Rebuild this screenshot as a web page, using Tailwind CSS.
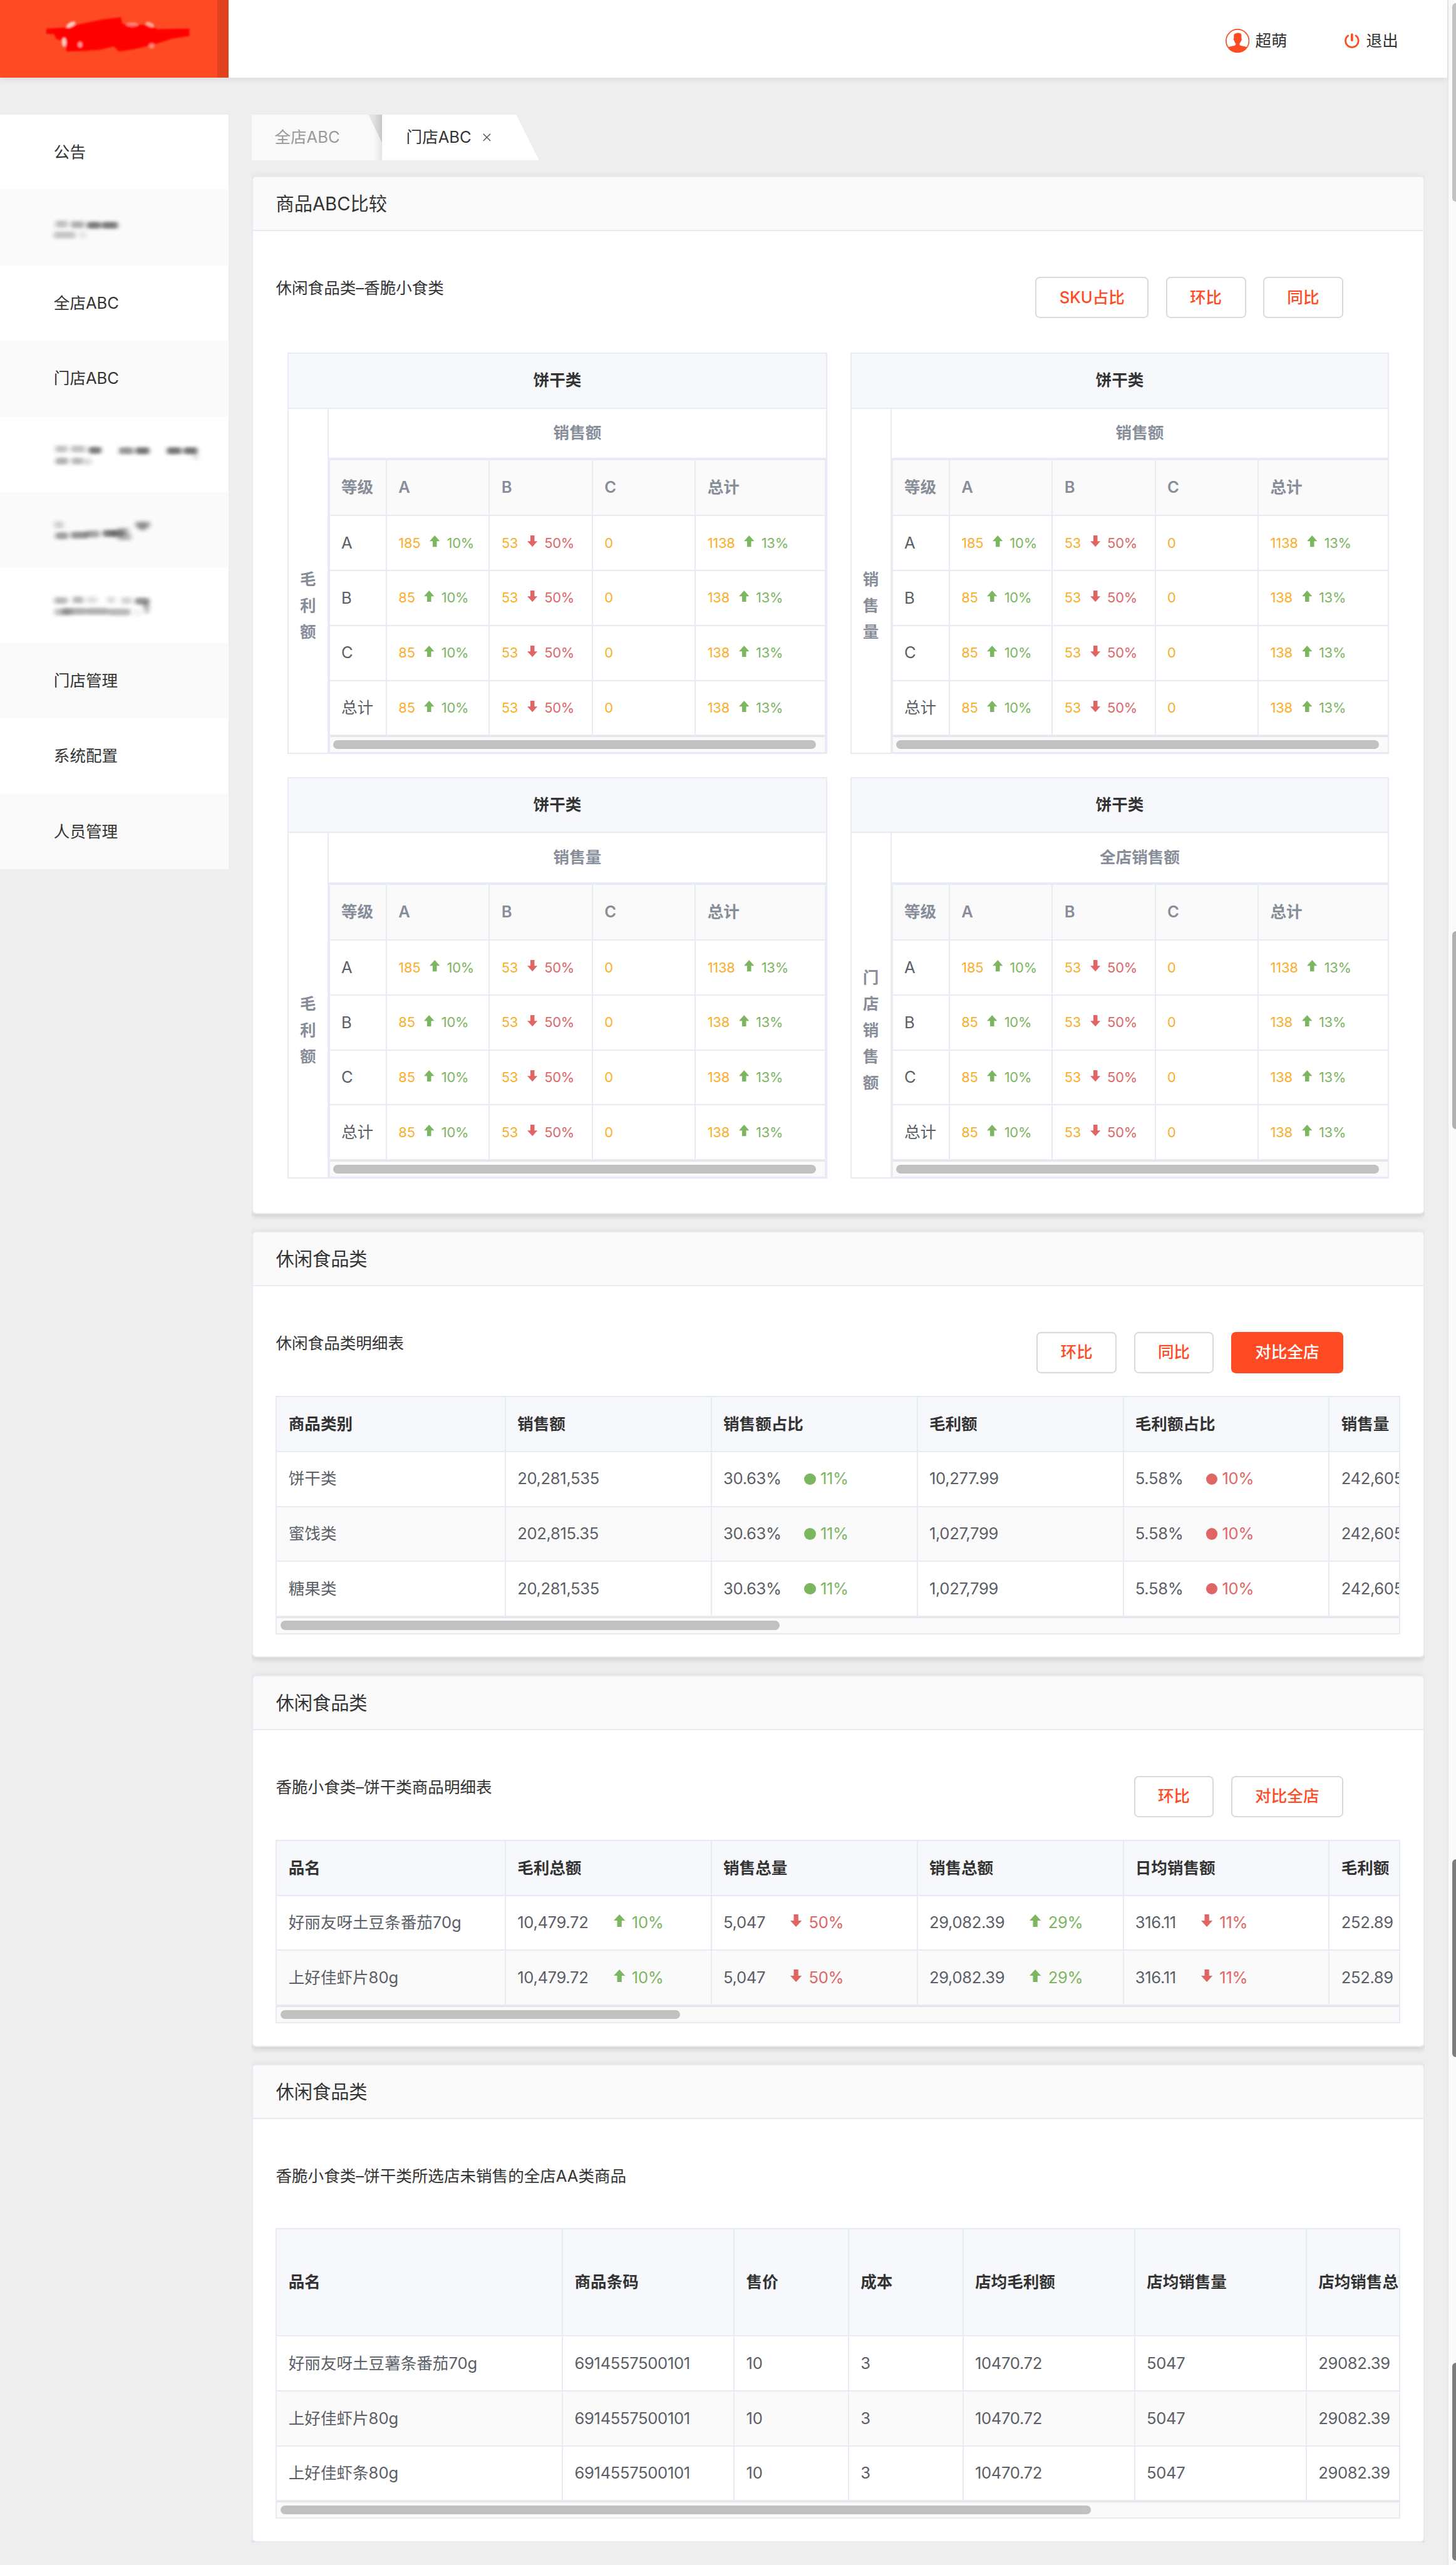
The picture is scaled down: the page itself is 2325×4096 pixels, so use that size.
<!DOCTYPE html>
<html lang="zh-CN" class="text-[29.234px]">
<head>
<meta charset="utf-8">
<title>门店ABC</title>
<script src="https://cdn.jsdelivr.net/npm/@tailwindcss/browser@4"></script>
</head>
<body class="overflow-hidden bg-[#eeeeee] font-['Inter','Noto_Sans_CJK_SC',sans-serif] text-sm text-[#333333]">
<div class="flex h-[4096px] w-[2325px] overflow-hidden">
  <div class="flex w-316.25 shrink-0 flex-col">
    <header class="relative flex h-17 shrink-0 justify-between bg-white shadow-[0_4px_10px_rgba(0,0,0,0.07)]">
      <div class="h-17 w-50 border-r-[18px] border-[#e2431f] bg-[#fe4b24]">
        <svg class="h-17 w-47.5" viewBox="0 0 380 136">
          <defs><filter id="soft" x="-20%" y="-20%" width="140%" height="140%"><feGaussianBlur stdDeviation="2"/></filter></defs>
          <g filter="url(#soft)">
            <polygon fill="#ff0000" points="81,50 116,48 150,40 180,34 211,30 214,42 263,44 275,51 331,50 331,63 300,68 269,78 235,86 208,90 199,81 175,87 147,89 116,90 116,74 98,68 95,60 81,59"/>
            <g fill="#ffc4bc">
              <ellipse cx="124" cy="43" rx="9" ry="4" transform="rotate(-28 124 43)"/>
              <ellipse cx="231" cy="43" rx="11" ry="4" opacity=".5"/>
              <ellipse cx="262" cy="43" rx="8" ry="4" transform="rotate(25 262 43)" opacity=".7"/>
              <ellipse cx="112" cy="74" rx="4" ry="8"/>
              <ellipse cx="140" cy="78" rx="4" ry="5" opacity=".7"/>
              <ellipse cx="265" cy="80" rx="5" ry="5" opacity=".5"/>
            </g>
          </g>
        </svg>
      </div>
      <div class="flex items-center pt-0.75 pr-10.75">
        <svg class="h-5.25 w-5.25" viewBox="0 0 42 42">
          <defs><clipPath id="disc"><circle cx="21" cy="21" r="20"/></clipPath></defs>
          <g clip-path="url(#disc)" fill="#fe4b24">
            <path d="M14.500 12c0-2.400 1.300-3.800 3.200-3.900 1.600-1.100 4-1 5.600-.6 3.200 0 4.700 1.600 4.600 4.300l-.2 5c1.200.2.900 3.200-.6 4.300-.5 2.300-1.500 3.600-2.700 4.800 0 2 .9 3 2.600 3.600l6.600 1.400c3 .7 5.500 2 7 4.100V43H2v-8c1.500-2.200 3.500-3.400 6.500-4.100l6.600-1.400c2-.6 2.800-1.600 2.800-3.600-1.200-1.200-2.200-2.900-2.600-5.100-1.500-1-1.900-4.100-.7-4.300z"/>
          </g>
          <circle cx="21" cy="21" r="20" fill="none" stroke="#fe4b24" stroke-width="1.900"/>
        </svg>
        <span class="ml-1.25">超萌</span>
        <svg class="ml-12.5 h-3.25 w-3.25" viewBox="0 0 26 26" fill="none" stroke="#fe4b24" stroke-width="3" stroke-linecap="round">
          <path d="M6.300 4.300a11.300 11.300 0 1 0 13.400 0"/><path d="M13 2.200v10" stroke-width="4"/>
        </svg>
        <span class="ml-1.5">退出</span>
      </div>
    </header>

    <div class="mt-8 flex">
      <nav id="side" class="w-50 shrink-0"></nav>
      <main class="ml-5 w-256.25 overflow-hidden">
        <div class="flex h-10">
          <div class="relative flex w-28.5 items-center bg-linear-to-r from-[#eeeeee] from-85% to-[#d9d9d9] pl-5 text-[#999999]">
            <svg class="absolute inset-0 h-full w-full" viewBox="0 0 228 80" preserveAspectRatio="none"><polygon points="0,0 204,0 228,50 228,80 0,80" fill="#f9f9f9"/></svg>
            <div class="absolute inset-y-0 right-0 w-2 bg-linear-to-r from-black/0 to-black/8"></div>
            <span class="relative">全店ABC</span>
          </div>
          <div class="flex w-34.25 items-center bg-white pl-5.25 [clip-path:polygon(0_0,85.5%_0,100%_100%,0_100%)]">
            <span>门店ABC</span>
            <svg class="ml-2.5 h-1.75 w-1.75" viewBox="0 0 14 14" stroke="#555555" stroke-width="1.600"><path d="M.8.8l12.400 12.400M13.200.8L.8 13.200"/></svg>
          </div>
        </div>
        <div id="cards" class="mt-3.5 flex flex-col gap-3.75"></div>
      </main>
    </div>
  </div>

  <div class="flex flex-1 flex-col border-l-2 border-[#e8e8e8] bg-[#fafafa] pl-0.75">
    <div class="mt-0.75 h-43.25 shrink-0 rounded-l-lg bg-[#c1c1c1]"></div>
    <div class="mt-159.5 h-43.25 shrink-0 rounded-l-lg bg-[#b0b0b0]"></div>
    <div class="mt-159.5 h-43.25 shrink-0 rounded-l-lg bg-[#7d7d7d]"></div>
    <div class="mt-66.75 h-43.25 shrink-0 rounded-l-lg bg-[#7d7d7d]"></div>
  </div>
</div>

<script>
// Sidebar: strings are labels, arrays are redacted entries as [x, y, width, darkness] strokes.
const side = [
  '公告',
  [[97,58,21,.35],[124,59,23,.45],[152,60,24,.75],[178,60,28,.75],[94,77,38,.3],[140,77,10,.15]],
  '全店ABC', '门店ABC',
  [[97,55,21,.35],[124,55,25,.35],[155,57,22,.75],[208,58,25,.6],[237,58,24,.8],[292,58,25,.8],[321,58,24,.8],[338,68,8,.2],[97,76,22,.45],[125,76,20,.4],[146,77,14,.2]],
  [[95,55,16,.25],[237,55,25,.5],[243,60,12,.4],[97,74,22,.55],[124,73,30,.6],[150,71,24,.5],[180,70,24,.75],[195,70,22,.6],[205,66,20,.4],[205,76,24,.4]],
  [[95,56,23,.4],[127,55,19,.4],[152,55,18,.18],[187,55,14,.2],[212,56,18,.25],[236,57,25,.6],[250,64,11,.45],[252,73,9,.35],[95,76,30,.35],[108,75,42,.45],[150,75,40,.45],[190,76,38,.4],[236,77,8,.12]],
  '门店管理', '系统配置', '人员管理',
];
const smudge = s => `<svg class="h-16.5 w-50" viewBox="0 0 400 132">
  <defs><filter id="smear" x="-10%" y="-60%" width="120%" height="220%"><feGaussianBlur stdDeviation="3.8 3"/></filter></defs>
  <g filter="url(#smear)" fill="#333333" opacity=".85" transform="translate(0 2)">${s.map(([x, y, w, o]) => `<rect x="${x}" y="${y - 6}" width="${w}" height="12" rx="4" opacity="${o}"/>`).join('')}</g></svg>`;
document.getElementById('side').innerHTML = side.map((s, i) =>
  `<div class="${i % 2 ? 'bg-[#fafafa]' : 'bg-white'} flex h-16.5 items-center">${typeof s === 'string' ? `<span class="pl-11.75">${s}</span>` : smudge(s)}</div>`).join('');

const UP = 'M10 0L20 11H14V22H6V11H0z', DOWN = 'M6 0h8v11h6L10 22 0 11h6z';
const arrow = (dir, cls) => `<svg class="${cls}" viewBox="0 0 20 22" fill="currentColor"><path d="${dir === 'u' ? UP : DOWN}"/></svg>`;
const tone = d => (d === 'u' || d === 'g') ? 'text-[#7db661]' : 'text-[#e06666]';
const button = (t, on) => `<button class="${on ? 'border-[#fe4b24] bg-[#fe4b24] text-white' : 'border-[#d9d9d9] bg-white text-[#fe4b24]'} ${t.startsWith('SKU') ? 'w-24.75' : t.length > 2 ? 'w-24.5' : 'w-17.5'} h-9 rounded border-2 text-center font-medium">${t}</button>`;
const scrollbar = w => `<div class="flex h-3.5 items-center border-t-2 border-[#e6e6e8] bg-[#fafafa] pl-0.75"><div class="${w} h-2 rounded-full bg-[#c1c1c1]"></div></div>`;

const card = (title, sub, tools, height, toolsH, body) => `
<section class="${height} rounded-[7px] border-2 border-[#e6ebf5] bg-white shadow-[0_4px_8px_rgba(0,0,0,0.1),0_0_12px_rgba(0,0,0,0.05)]">
  <h2 class="flex h-11.75 items-center rounded-t-[6px] border-b-2 border-[#e6ebf5] bg-[#fafafa] pt-0.25 pl-5 text-base">${title}</h2>
  <div class="${toolsH} flex items-start justify-between pt-10 pr-17.5 pl-5">
    <h3 class="text-sm leading-5">${sub}</h3>
    <div class="flex gap-3.75">${tools}</div>
  </div>
  ${body}
</section>`;

// 3-grade matrix
const small = c => {
  const [v, d, p] = c;
  return `<span class="text-[#fbae2c]">${v}</span>` + (d ? `<span class="${tone(d)} flex items-center">${arrow(d, 'ml-2 mb-0.75 w-2.25 h-2.5')}<span class="ml-1.5">${p}</span></span>` : '');
};
const mw = ['w-12.5', 'w-22.5', 'w-22.5', 'w-22.5'];
const matrixRow = (name, a, t) => `<div class="flex h-12">
  ${[`<span class="text-sm tracking-normal">${name}</span>`, small([a, 'u', '10%']), small(['53', 'd', '50%']), small(['0'])].map((c, i) => `<div class="${mw[i]} flex shrink-0 items-center border-r-2 border-b-2 border-[#e6ebf5] px-2.5 tracking-[-0.01em] whitespace-nowrap">${c}</div>`).join('')}
  <div class="flex flex-1 items-center border-b-2 border-[#e6ebf5] px-2.5 tracking-[-0.01em]">${small([t, 'u', '13%'])}</div></div>`;
const matrix = (w, edge, side, top) => `
<div class="${w} h-87.75 border-2 border-[#e6ebf5]">
  <div class="flex h-12 items-center justify-center border-b-2 border-[#e6ebf5] bg-[#f7f8fc] font-bold">饼干类</div>
  <div class="flex">
    <div class="flex w-8.75 shrink-0 flex-col items-center justify-center border-r-2 border-[#e6ebf5] pt-10.75 leading-5.75 font-bold text-[#878d99]">${[...side].map(c => `<span>${c}</span>`).join('')}</div>
    <div class="flex-1">
      <div class="flex h-11 items-center justify-center border-b-2 border-[#e6ebf5] font-bold text-[#878d99]">${top}</div>
      <div class="${edge} border-[#e6ebf5] text-xs text-[#5a5e66]">
        <div class="flex h-12.25 bg-[#fafafa] text-sm font-semibold text-[#878d99]">
          ${['等级', 'A', 'B', 'C'].map((c, i) => `<div class="${mw[i]} flex shrink-0 items-center border-r-2 border-b-2 border-[#e6ebf5] pl-2.5 whitespace-nowrap">${c}</div>`).join('')}
          <div class="flex flex-1 items-center border-b-2 border-[#e6ebf5] pl-2.5">总计</div>
        </div>
        ${matrixRow('A', '185', '1138')}${matrixRow('B', '85', '138')}${matrixRow('C', '85', '138')}${matrixRow('总计', '85', '138')}
        ${scrollbar('w-105.5')}
      </div>
    </div>
  </div>
</div>`;
const L = ['w-118', 'border-2'], R = ['w-117.75', 'border-y-2 border-l-2'];

// Detail table
const num = v => /^[\d.,%]+$/.test(v) ? `<span class="tracking-[-0.013em]">${v}</span>` : v;
const cell = c => {
  if (typeof c === 'string') return num(c);
  const [v, d, p] = c;
  const mark = (d === 'g' || d === 'r') ? '<i class="mr-1 ml-5 h-2.5 w-2.5 rounded-full bg-current"></i>' : arrow(d, 'ml-5.5 mr-1.5 mb-1 h-2.75 w-2.5');
  return `${num(v)}<span class="${tone(d)} flex items-center">${mark}${num(p)}</span>`;
};
const table = (cols, headH, head, rows, thumb) => `
<div class="px-5"><div class="overflow-hidden border-2 border-[#e6ebf5]">
  <div class="${headH} flex bg-[#f7f8fc] font-bold">${head.map((c, i) => `<div class="${cols[i]} flex shrink-0 items-center border-r-2 border-b-2 border-[#e6ebf5] px-2.5 whitespace-nowrap">${c}</div>`).join('')}</div>
  ${rows.map((r, n) => `<div class="${n % 2 ? 'bg-[#fafafa]' : 'bg-white'} flex h-12 text-[#5a5e66]">${r.map((c, i) => `<div class="${cols[i]} flex shrink-0 items-center border-r-2 border-b-2 border-[#e6ebf5] px-2.5 whitespace-nowrap">${cell(c)}</div>`).join('')}</div>`).join('')}
  ${scrollbar(thumb)}
</div></div>`;
const wide = ['w-50', 'w-45', 'w-45', 'w-45', 'w-45', 'w-45'];
const goods = ['w-62.5', 'w-37.5', 'w-25', 'w-25', 'w-37.5', 'w-37.5', 'w-37.5'];
const g = ['30.63%', 'g', '11%'], r = ['5.58%', 'r', '10%'];
const sold = n => [n, ['10,479.72', 'u', '10%'], ['5,047', 'd', '50%'], ['29,082.39', 'u', '29%'], ['316.11', 'd', '11%'], '252.89'];
const unsold = n => [n, '6914557500101', '10', '3', '10470.72', '5047', '29082.39'];

document.getElementById('cards').innerHTML = [
  card('商品ABC比较', '休闲食品类–香脆小食类', button('SKU占比') + button('环比') + button('同比'), 'h-226.75', 'h-26.5',
    `<div class="flex flex-wrap gap-5 pl-7.5">
      ${matrix(...L, '毛利额', '销售额')}${matrix(...R, '销售量', '销售额')}${matrix(...L, '毛利额', '销售量')}${matrix(...R, '门店销售额', '全店销售额')}
    </div>`),
  card('休闲食品类', '休闲食品类明细表', button('环比') + button('同比') + button('对比全店', true), 'h-93.25', 'h-24',
    table(wide, 'h-12', ['商品类别', '销售额', '销售额占比', '毛利额', '毛利额占比', '销售量'], [
      ['饼干类', '20,281,535', g, '10,277.99', r, '242,605'],
      ['蜜饯类', '202,815.35', g, '1,027,799', r, '242,605'],
      ['糖果类', '20,281,535', g, '1,027,799', r, '242,605']], 'w-109')),
  card('休闲食品类', '香脆小食类–饼干类商品明细表', button('环比') + button('对比全店'), 'h-81.25', 'h-24',
    table(wide, 'h-12', ['品名', '毛利总额', '销售总量', '销售总额', '日均销售额', '毛利额'],
      [sold('好丽友呀土豆条番茄70g'), sold('上好佳虾片80g')], 'w-87.25')),
  card('休闲食品类', '香脆小食类–饼干类所选店未销售的全店AA类商品', '', 'h-104.5', 'h-23.75',
    table(goods, 'h-23.5', ['品名', '商品条码', '售价', '成本', '店均毛利额', '店均销售量', '店均销售总额'],
      [unsold('好丽友呀土豆薯条番茄70g'), unsold('上好佳虾片80g'), unsold('上好佳虾条80g')], 'w-177')),
].join('');
</script>
</body>
</html>
